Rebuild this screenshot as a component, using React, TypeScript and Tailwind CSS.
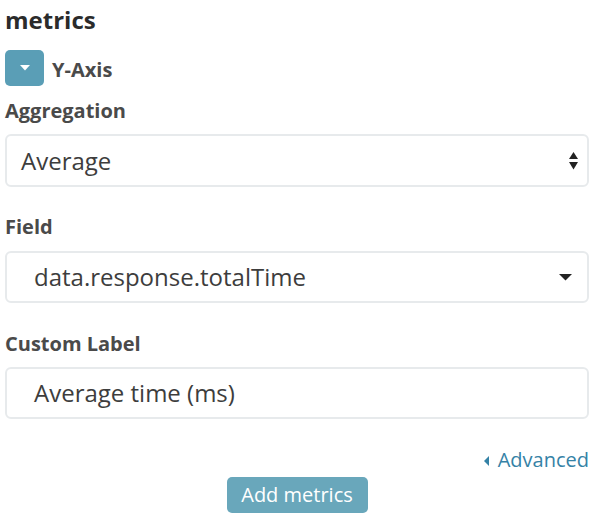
export default function App() {
  return (
    <div className="w-[601px] h-[518px] bg-white overflow-hidden font-['Open_Sans',sans-serif]">
      <div className="ml-[5px] w-[584px] pt-[4px]">
        <h1 className="text-[24px] leading-[32px] font-bold text-[#2b2b2b]">metrics</h1>

        {/* Y-Axis toggle */}
        <div className="mt-[14px] flex items-center h-[36px]">
          <button className="w-[39px] h-[36px] rounded-[5px] bg-[#5a9eb6] flex items-center justify-center">
            <svg width="10" height="6" viewBox="0 0 10 6">
              <path d="M0 0 H10 L5 5.5 Z" fill="#ffffff" />
            </svg>
          </button>
          <span className="ml-[8px] mt-[4px] text-[20px] leading-[20px] font-bold text-[#4a4a4a]">Y-Axis</span>
        </div>

        <label className="block mt-[13px] text-[20px] leading-[24px] font-bold text-[#4a4a4a]">Aggregation</label>
        <div className="mt-[11px] h-[53px] border-2 border-[#e7eaec] rounded-[6px] flex items-center pl-[14px] pr-[9px]">
          <span className="flex-1 text-[24px] text-[#3d3d3d]">Average</span>
          <svg width="9" height="18" viewBox="0 0 9 18">
            <path d="M4.5 0 L9 7 H0 Z" fill="#222" />
            <path d="M0 10 H9 L4.5 17.5 Z" fill="#222" />
          </svg>
        </div>

        <label className="block mt-[28px] text-[20px] leading-[24px] font-bold text-[#4a4a4a]">Field</label>
        <div className="mt-[12px] h-[52px] border-2 border-[#e7eaec] rounded-[6px] flex items-center pl-[27px] pr-[15px]">
          <span className="flex-1 text-[24px] text-[#3d3d3d]">data.response.totalTime</span>
          <svg width="13" height="7" viewBox="0 0 13 7">
            <path d="M0 0 H13 L6.5 6.5 Z" fill="#222" />
          </svg>
        </div>

        <label className="block mt-[29px] text-[20px] leading-[24px] font-bold text-[#4a4a4a]">Custom Label</label>
        <div className="mt-[11px] h-[52px] border-2 border-[#e7eaec] rounded-[6px] flex items-center pl-[27px]">
          <span className="text-[24px] text-[#3d3d3d]">Average time (ms)</span>
        </div>

        <div className="mt-[29px] flex justify-end items-center text-[20px] leading-[24px] text-[#3582a6]">
          <svg width="5" height="10" viewBox="0 0 5 10" className="mr-[9px] mt-[1px]">
            <path d="M5 0 V10 L0 5 Z" fill="#3582a6" />
          </svg>
          <span>Advanced</span>
        </div>

        <div className="mt-[5px] flex justify-center">
          <button className="h-[36px] w-[141px] rounded-[5px] bg-[#69a7bb] text-white text-[20px] leading-[36px]">
            Add metrics
          </button>
        </div>
      </div>
    </div>
  );
}
